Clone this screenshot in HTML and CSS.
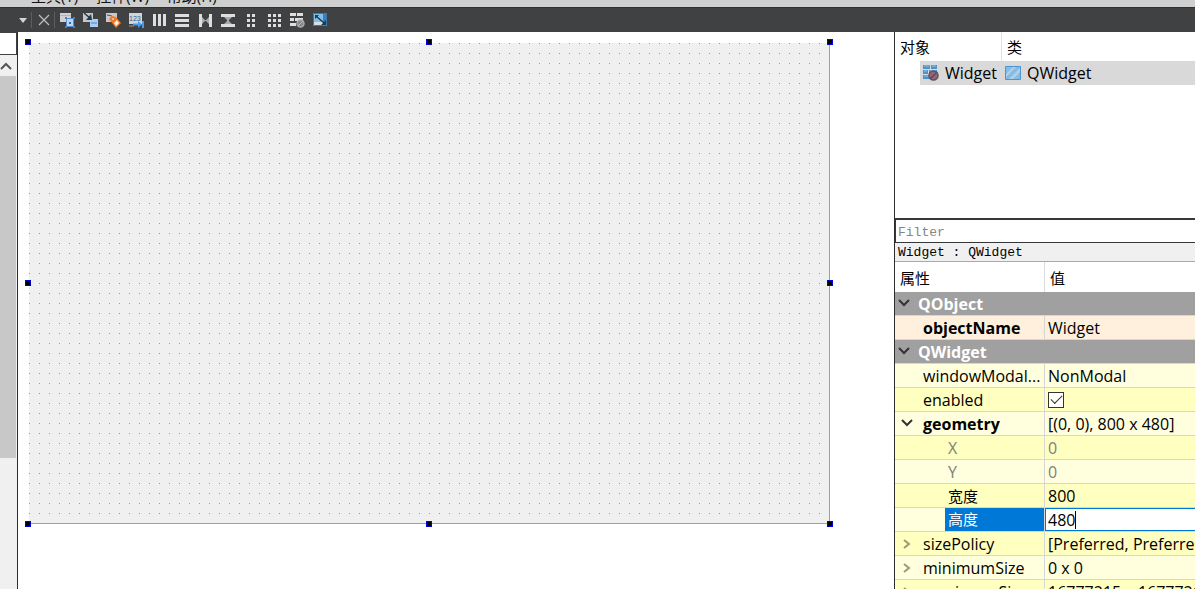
FILE: index.html
```html
<!DOCTYPE html>
<html lang="zh-CN">
<head>
<meta charset="utf-8">
<title>Widget - Designer</title>
<link rel="stylesheet" href="styles.css">
</head>
<body>
<nav class="menubar">
  <a href="#tools">工具(T)</a><a href="#widgets">控件(W)</a><a href="#help">帮助(H)</a>
</nav>
<div class="toolbar" role="toolbar" aria-label="Form tools">
  <button class="tool-drop" aria-label="Open files"><svg width="8" height="5"><path d="M0 0h8L4 5z" fill="#d4d4d4"/></svg></button>
  <span class="sep"></span>
  <button class="tool" aria-label="Close"><svg width="12" height="12"><path d="M1 1l10 10M11 1L1 11" stroke="#bdbdbd" stroke-width="1.3"/></svg></button>
  <span class="sep"></span>
  <button class="tool" aria-label="Edit widgets"><svg width="16" height="16"><path d="M1 1h11v9H1z" fill="#d0d0d0"/><path d="M1 3.500h11" stroke="#b4b4b4"/><path d="M7.500 6.500h7v8h-7z" fill="#b7d6fa" stroke="#5c8fd0"/><path d="M6 5h2v2H6zM14 5h2v2h-2zM6 14h2v2H6zM14 14h2v2h-2z" fill="#4d80c4"/><path d="M10 10h2v2h-2z" fill="#2f68ae"/></svg></button>
  <button class="tool" aria-label="Edit signals and slots"><svg width="16" height="16"><path d="M1 1h10v9H1z" fill="#c4c6c8"/><path d="M8 7h8v8H8z" fill="#a9cdf7"/><path d="M9 11h6" stroke="#4d80c4"/><path d="M2 1l6 5" stroke="#203d4a" stroke-width="1.600"/><path d="M10 8H4l5-6z" fill="#203d4a"/></svg></button>
  <button class="tool" aria-label="Edit buddies"><svg width="16" height="16"><path d="M1 1h11v9H1z" fill="#c8c8c8"/><path d="M2 3l5 1" stroke="#555"/><path d="M4 7l3-3 4 1 5 6-5 5z" fill="#f07828"/><path d="M7 7l1-1 1 1-1 1zM9 11l3-3 2 3-3 3z" fill="#fff3e4"/></svg></button>
  <button class="tool" aria-label="Edit tab order"><svg width="16" height="16"><path d="M1 1h13v11H1z" fill="#d4d4d4"/><path d="M1 14h5" stroke="#999"/><text x="1" y="9" font-family="Liberation Sans" font-size="7" fill="#1d62a5">123</text><path d="M5 12.500h6M15 9v7" stroke="#4b9cec" stroke-width="2"/><path d="M10 9l4 3.500-4 3.500z" fill="#4b9cec"/></svg></button>
  <button class="tool" aria-label="Lay out horizontally"><svg width="16" height="16"><path d="M2 2h3v12H2zM7 2h3v12H7zM12 2h3v12h-3z" fill="#dedede"/></svg></button>
  <button class="tool" aria-label="Lay out vertically"><svg width="16" height="16"><path d="M1 2h14v3H1zM1 7h14v3H1zM1 12h14v3H1z" fill="#dedede"/></svg></button>
  <button class="tool" aria-label="Horizontal splitter"><svg width="16" height="16"><path d="M2 2h3v13H2zM12 2h3v13h-3z" fill="#dedede"/><path d="M5 5v7l3-3h1l3 3V5L9 8H8z" fill="#aaa"/></svg></button>
  <button class="tool" aria-label="Vertical splitter"><svg width="16" height="16"><path d="M1 2h14v3H1zM1 12h14v3H1z" fill="#dedede"/><path d="M4 5h8L9 8v1l3 3H4l3-3V8z" fill="#aaa"/></svg></button>
  <button class="tool" aria-label="Form layout"><svg width="16" height="16"><path d="M4 2h3v3H4zM9 2h3v3H9zM4 7h3v3H4zM9 7h3v3H9zM4 12h3v3H4zM9 12h3v3H9z" fill="#dedede"/></svg></button>
  <button class="tool" aria-label="Grid layout"><svg width="16" height="16"><path d="M2 2h3v3H2zM7 2h3v3H7zM12 2h3v3h-3zM2 7h3v3H2zM7 7h3v3H7zM12 7h3v3h-3zM2 12h3v3H2zM7 12h3v3H7zM12 12h3v3h-3z" fill="#dedede"/></svg></button>
  <button class="tool" aria-label="Break layout"><svg width="16" height="16"><path d="M1 1h6v3H1zM8 1h6v3H8zM1 6h4v3H1zM6 6h8v3H6zM1 11h6v3H1z" fill="#dedede"/><circle cx="11.500" cy="11.500" r="3.500" fill="#888" stroke="#aaa" stroke-width="1.500"/><path d="M9 14l5-5" stroke="#bbb"/></svg></button>
  <button class="tool" aria-label="Adjust size"><svg width="16" height="16"><path d="M1 1h14v13H1z" fill="#d5dde3"/><path d="M1 1h10v9H1z" fill="#84bfe9"/><path d="M11 1h4v9h-4z" fill="#3c7fb8"/><path d="M1.500 1.500h13v12h-13z" fill="none" stroke="#3a79af"/><path d="M4 4l8 7" stroke="#153f53" stroke-width="1.500"/><path d="M3 3h4L3 7zM14 13H9l5-5z" fill="#153f53"/></svg></button>
</div>
<div class="workspace">
  <aside class="left">
    <input class="box" type="text" aria-label="Widget box filter">
    <div class="scrollbar">
      <button class="up" aria-label="Scroll up"><svg width="12" height="8"><path d="M1 7l5-5 5 5" fill="none" stroke="#555" stroke-width="2"/></svg></button>
      <div class="thumb"></div>
    </div>
  </aside>
  <main class="editor">
    <div class="form">
      <svg class="dots" width="100%" height="100%"><defs><pattern id="grid" width="10" height="10" patternUnits="userSpaceOnUse"><path d="M0 0h1v1H0z" fill="#999"/></pattern></defs><rect width="100%" height="100%" fill="url(#grid)"/></svg>
      <i class="handle top start"></i><i class="handle top center"></i><i class="handle top end"></i>
      <i class="handle middle start"></i><i class="handle middle end"></i>
      <i class="handle bottom start"></i><i class="handle bottom center"></i><i class="handle bottom end"></i>
    </div>
  </main>
  <aside class="panel">
    <section class="objects">
      <table class="object-table">
        <thead><tr><th class="object-col">对象</th><th>类</th></tr></thead>
        <tbody><tr>
          <td class="object-name"><span class="object-cell"><svg width="18" height="18"><path d="M1 1h7v4H1zM9 1h6v4H9zM1 6h5v4H1zM7 6h8v4H7zM1 11h7v4H1z" fill="#4c94c9"/><path d="M2 2h5M10 2h4M2 7h3M8 7h6M2 12h5" stroke="#8bc4ea"/><circle cx="11.500" cy="11.500" r="4.500" fill="#8d6878" stroke="#744858" stroke-width="1.500"/><path d="M8 15l7-7" stroke="#60495c" stroke-width="1.500"/></svg>Widget</span></td>
          <td class="object-class"><span class="object-cell"><svg width="18" height="16"><path d="M1.500 1.500h15v13h-15z" fill="#82bce9" stroke="#4b94d4"/><path d="M2 9l7-7h3L2 12zM5 14L16 3v4l-7 7z" fill="#b5cfe2"/></svg>QWidget</span></td>
        </tr></tbody>
      </table>
    </section>
    <input class="filter" type="text" placeholder="Filter" aria-label="Filter">
    <div class="path">Widget : QWidget</div>
    <table class="props">
      <thead><tr><th class="key">属性</th><th>值</th></tr></thead>
      <tbody>
        <tr class="group"><th colspan="2"><svg class="arrow" width="12" height="8"><path d="M1 1l5 5 5-5"/></svg>QObject</th></tr>
        <tr class="peach"><th class="strong">objectName</th><td>Widget</td></tr>
        <tr class="group"><th colspan="2"><svg class="arrow" width="12" height="8"><path d="M1 1l5 5 5-5"/></svg>QWidget</th></tr>
        <tr class="light"><th>windowModal...</th><td>NonModal</td></tr>
        <tr class="deep"><th><label for="enabled">enabled</label></th><td><input id="enabled" class="check" type="checkbox" checked></td></tr>
        <tr class="light"><th class="strong branch"><svg class="arrow" width="12" height="8"><path d="M1 1l5 5 5-5"/></svg>geometry</th><td>[(0, 0), 800 x 480]</td></tr>
        <tr class="deep muted"><th class="sub">X</th><td>0</td></tr>
        <tr class="light muted"><th class="sub">Y</th><td>0</td></tr>
        <tr class="deep"><th class="sub cjk">宽度</th><td>800</td></tr>
        <tr class="light"><th class="selected cjk"><label for="height">高度</label></th><td class="editing"><input id="height" class="value" type="text" value="480"><i class="caret"></i></td></tr>
        <tr class="deep"><th class="branch closed"><svg class="arrow" width="12" height="12"><path d="M3 2l5 4-5 4"/></svg>sizePolicy</th><td>[Preferred, Preferred, 0, 0]</td></tr>
        <tr class="light"><th class="branch closed"><svg class="arrow" width="12" height="12"><path d="M3 2l5 4-5 4"/></svg>minimumSize</th><td>0 x 0</td></tr>
        <tr class="deep"><th class="branch closed"><svg class="arrow" width="12" height="12"><path d="M3 2l5 4-5 4"/></svg>maximumSize</th><td>16777215 x 16777215</td></tr>
      </tbody>
    </table>
  </aside>
</div>
</body>
</html>
```
FILE: styles.css
```css
* { box-sizing: border-box; }
body {
  margin: 0;
  height: 100vh;
  display: flex;
  flex-direction: column;
  overflow: hidden;
  background: #fff;
  color: #000;
  font: 16px/22px "Open Sans", "Noto Sans CJK SC", sans-serif;
}
button { padding: 0; border: 0; background: none; }
input { margin: 0; border-radius: 0; outline: 0; font: inherit; color: inherit; }
svg { display: block; flex: none; }

.menubar {
  flex: none;
  height: 7px;
  display: flex;
  align-items: flex-end;
  gap: 18px;
  padding: 0 31px;
  overflow: hidden;
  background: #cfcfcf;
  font-size: 15px;
}
.menubar a { color: #111; text-decoration: none; }
.toolbar {
  flex: none;
  height: 25px;
  display: flex;
  align-items: center;
  padding-left: 14px;
  background: #404142;
  border-top: 1px solid #2f3031;
}
.tool-drop { width: 17px; height: 24px; display: grid; place-items: center; }
.tool { width: 23px; height: 24px; display: grid; place-items: center; }
.tool + .sep { margin-left: -1px; }
.sep { width: 1px; height: 16px; background: #5d5e5f; }

.workspace {
  flex: 1;
  min-height: 0;
  display: grid;
  grid-template-columns: 18px minmax(0, 1fr) 301px;
}
.left {
  display: flex;
  flex-direction: column;
  background: #f0f0f0;
  border-right: 1px solid #2d2d2d;
}
.box {
  width: 100%;
  height: 23px;
  border: solid #404142;
  border-width: 1px 1px 1px 0;
  background: #fff;
}
.scrollbar { flex: 1; padding-right: 1px; background: #f0f0f0; }
.up { width: 12px; height: 21px; display: grid; place-items: center; }
.thumb { height: 382px; background: #c8c8c8; }

.editor { padding: 11px; overflow: hidden; }
.form {
  position: relative;
  width: 801px;
  height: 481px;
  background: #f0f0f0;
  border: solid #a0a0a0;
  border-width: 0 1px 1px 0;
}
.dots { width: 100%; height: 100%; }
.handle {
  position: absolute;
  width: 6px;
  height: 6px;
  background: #000;
  border: 1px solid #0000d8;
}
.top { top: -4px; }
.middle { top: 237px; }
.bottom { bottom: -4px; }
.start { left: -4px; }
.center { left: 397px; }
.end { right: -4px; }

.panel {
  display: flex;
  flex-direction: column;
  overflow: hidden;
  border-left: 1px solid #2d2d2d;
}
table { width: 100%; border-collapse: separate; border-spacing: 0; table-layout: fixed; }
th, td { padding: 0; text-align: left; font-weight: 400; white-space: nowrap; }
.objects { flex: none; height: 186px; }
.objects thead th { height: 29px; padding: 0 5px; font-size: 15px; }
.objects .object-col { width: 107px; border-right: 1px solid #e2e2e2; }
.object-name { padding-left: 25px; }
.object-name .object-cell { padding-left: 2px; gap: 5px; }
.object-class .object-cell { padding-left: 2px; gap: 5px; }
.object-cell { height: 24px; display: flex; align-items: center; background: #d9d9d9; }

.filter {
  flex: none;
  width: 100%;
  height: 25px;
  padding: 3px 2px 0;
  border: solid #36373a;
  border-width: 2px 0 1px 1px;
  background: #fff;
  font: 13px/20px "Liberation Mono", monospace;
}
.filter::placeholder { color: #858585; opacity: 1; }
.path {
  flex: none;
  height: 19px;
  padding-left: 3px;
  background: #f0f0f0;
  border-bottom: 1px solid #aaa;
  font: 13px/20px "Liberation Mono", monospace;
}

.props thead th { height: 30px; padding: 2px 5px 0; font-size: 15px; }
.props thead .key { width: 150px; border-right: 1px solid #dcdcdc; }
.props tbody th, .props tbody td { height: 24px; border-bottom: 1px solid #d6d6d6; }
.props tbody th { position: relative; padding-left: 28px; border-right: 1px solid #d6d6d6; }
.props tbody td { padding-left: 3px; }
.props .group th { padding-left: 23px; background: #a0a0a0; color: #fff; font-weight: 700; border-right: 0; }
.props .strong { font-weight: 700; }
.props tbody .sub { padding-left: 53px; }
.peach { background: #fff0de; }
.light { background: #ffffde; }
.deep { background: #ffffbf; }
.muted { color: #808080; }
.cjk { font-size: 15px; }
.arrow { position: absolute; left: 3px; top: 7px; fill: none; stroke: #333; stroke-width: 2; }
.branch .arrow { left: 6px; }
.closed .arrow { top: 6px; stroke: #9a9a78; }
.check {
  appearance: none;
  display: grid;
  place-items: center;
  width: 16px;
  height: 16px;
  border: 1px solid #333;
  background: #fff;
}
.check:checked::after {
  content: "";
  width: 10px;
  height: 5px;
  margin-bottom: 3px;
  border: solid #333;
  border-width: 0 0 1px 1px;
  transform: rotate(-45deg);
}
.props tbody .selected { padding-left: 50px; }
.selected label { display: block; height: 23px; padding-left: 3px; background: #0078d7; color: #fff; }
.props tbody .editing { position: relative; padding: 0; }
.value { display: block; width: 100%; height: 23px; padding: 0 2px; border: 1px solid #0078d7; border-right: 0; background: #fff; }
.caret { position: absolute; left: 30px; top: 3px; width: 1px; height: 18px; background: #000; }
```
